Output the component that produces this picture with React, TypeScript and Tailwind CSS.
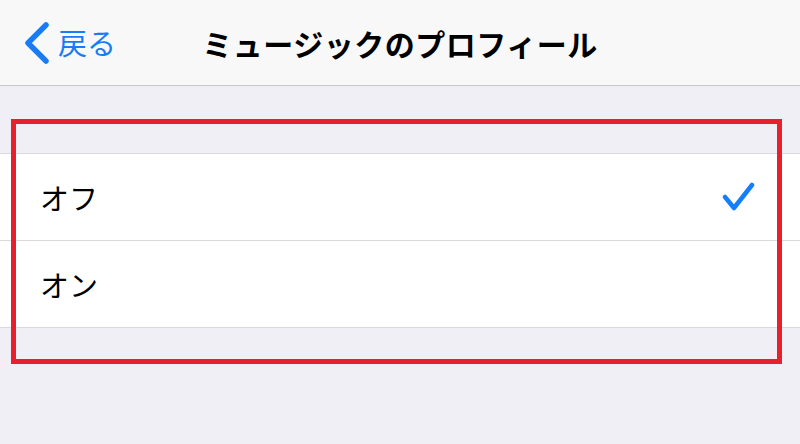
import React from 'react';

const font = { fontFamily: '"Noto Sans CJK JP", "Noto Sans", sans-serif' };

const options = [
  { label: 'オフ', checked: true },
  { label: 'オン', checked: false },
];

const App: React.FC = () => {
  return (
    <div className="relative w-[800px] h-[444px] overflow-hidden bg-[#f0eff5]" style={font}>
      {/* nav bar */}
      <div className="relative flex items-center h-[86px] bg-[#f8f8f8] border-b border-[#c8c7cc]">
        <div className="flex items-center pl-[24px] text-[#1a7cf5]">
          <svg width="26" height="42" viewBox="0 0 26 42" className="mr-[8px]">
            <polyline
              points="22,3 4,21 22,39"
              fill="none"
              stroke="#1a7cf5"
              strokeWidth="5.5"
              strokeLinecap="round"
              strokeLinejoin="round"
            />
          </svg>
          <span className="text-[29px] leading-none">戻る</span>
        </div>
        <h1 className="absolute left-0 right-0 text-center text-[30px] font-bold leading-none text-black tracking-[0.5px]">
          ミュージックのプロフィール
        </h1>
      </div>

      {/* list */}
      <div className="mt-[67px] bg-white border-y border-[#d9d8dd]">
        {options.map((opt, i) => (
          <div key={opt.label} className={`pl-[38px] ${i > 0 ? 'border-t border-[#d9d8dd]' : ''}`}>
            <div className="flex items-center justify-between h-[86px] pl-[2px] pr-[44px]">
              <span className="text-[29px] leading-none text-black">{opt.label}</span>
              {opt.checked && (
                <svg width="34" height="30" viewBox="0 0 34 30">
                  <polyline
                    points="3,15 12,26 30,3"
                    fill="none"
                    stroke="#157efb"
                    strokeWidth="4.5"
                    strokeLinecap="round"
                    strokeLinejoin="round"
                  />
                </svg>
              )}
            </div>
          </div>
        ))}
      </div>

      {/* annotation frame */}
      <div className="absolute left-[11px] top-[119px] w-[771px] h-[245px] border-[5px] border-[#e8202d]" />
    </div>
  );
};

export default App;
